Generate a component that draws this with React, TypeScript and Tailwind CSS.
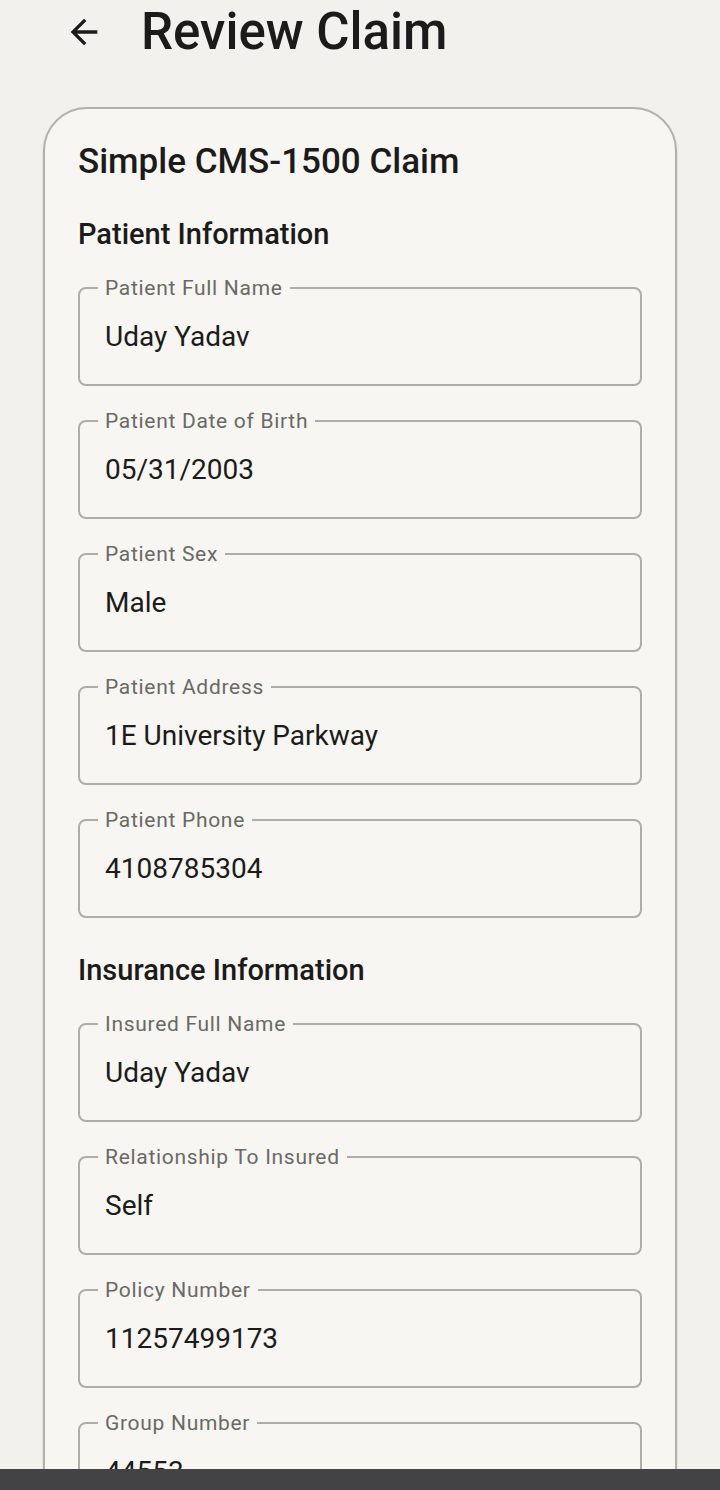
const patientFields = [
  { label: 'Patient Full Name', value: 'Uday Yadav' },
  { label: 'Patient Date of Birth', value: '05/31/2003' },
  { label: 'Patient Sex', value: 'Male' },
  { label: 'Patient Address', value: '1E University Parkway' },
  { label: 'Patient Phone', value: '4108785304' },
]

const insuranceFields = [
  { label: 'Insured Full Name', value: 'Uday Yadav' },
  { label: 'Relationship To Insured', value: 'Self' },
  { label: 'Policy Number', value: '11257499173' },
  { label: 'Group Number', value: '44553' },
]

function Field({ label, value }: { label: string; value: string }) {
  return (
    <fieldset className="rounded-[8px] border-2 border-[#afada7] pl-[18px] pr-4 pb-[29px]">
      <legend className="px-[7px] text-[21px] leading-[20px] tracking-[0.7px] text-[#6a6964]">{label}</legend>
      <div className="pl-[7px] pt-[21px] text-[28px] leading-[36px] text-[#1c1b1a]">{value}</div>
    </fieldset>
  )
}

export default function App() {
  return (
    <div className="relative h-[1490px] overflow-hidden bg-[#f2f1ed] font-['Roboto',sans-serif]">
      <div className="flex h-[64px] items-center">
        <button className="ml-[64px] flex h-10 w-10 items-center justify-center text-[#1c1b1a]">
          <svg width="40" height="40" viewBox="0 0 24 24" fill="currentColor">
            <path d="M20 11H7.83l5.59-5.59L12 4l-8 8 8 8 1.41-1.41L7.83 13H20v-2z" />
          </svg>
        </button>
        <h1 className="ml-[37px] text-[51px] font-medium leading-[64px] text-[#1c1b1a]">Review Claim</h1>
      </div>

      <div className="mx-[43px] mt-[43px] rounded-[44px] border-2 border-[#b3b1ab] bg-[#f7f6f3] px-[33px] pt-[33px] shadow-[0_1px_2px_rgba(0,0,0,0.15)]">
        <h2 className="text-[35px] font-medium leading-[40px] text-[#1c1b1a]">Simple CMS-1500 Claim</h2>

        <h3 className="mt-[34px] text-[29px] font-medium leading-[36px] text-[#1c1b1a]">Patient Information</h3>
        <div className="mt-[26px] flex flex-col gap-[25px]">
          {patientFields.map(f => (
            <Field key={f.label} label={f.label} value={f.value} />
          ))}
        </div>

        <h3 className="mt-[34px] text-[29px] font-medium leading-[36px] text-[#1c1b1a]">Insurance Information</h3>
        <div className="mt-[26px] flex flex-col gap-[25px] pb-10">
          {insuranceFields.map(f => (
            <Field key={f.label} label={f.label} value={f.value} />
          ))}
        </div>
      </div>

      <div className="absolute bottom-0 left-0 right-0 h-[21px] bg-[#434245]" />
    </div>
  )
}
